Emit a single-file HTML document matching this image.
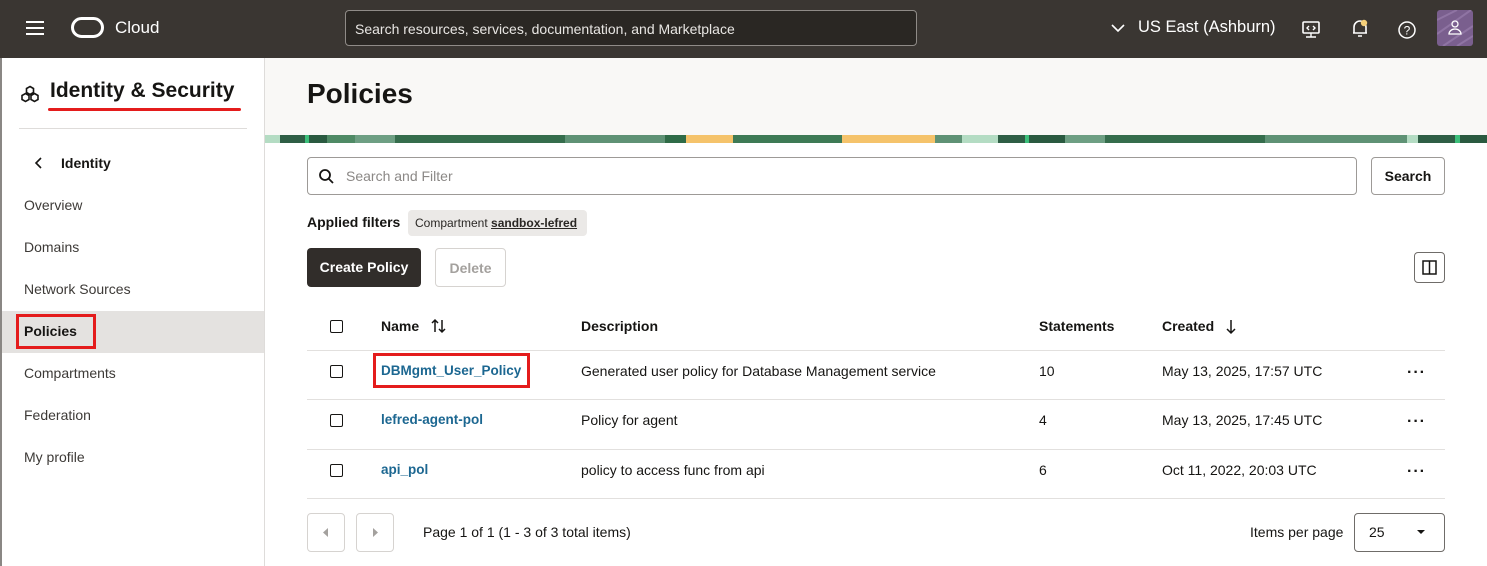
<!DOCTYPE html>
<html><head><meta charset="utf-8"><style>
*{box-sizing:border-box;margin:0;padding:0}
body{width:1487px;height:566px;overflow:hidden;font-family:"Liberation Sans",sans-serif;color:#161513;background:#fff;position:relative;font-size:14px}
.abs{position:absolute}
.top{left:0;top:0;width:1487px;height:58px;background:#3a3632}
.side{left:0;top:58px;width:265px;height:508px;background:#fff;border-right:1px solid #dedcda;border-left:2px solid #8a8784}
.nav{position:absolute;left:24px;font-size:14px;color:#3d3a37}
.hdr{left:265px;top:58px;width:1222px;height:77px;background:#f9f8f6}
.banner{left:265px;top:135px;width:1222px;height:8px;background:linear-gradient(90deg,#b4dcc3 0 15px,#2f5e45 15px 40px,#3cbf7a 40px 44px,#2a5a40 44px 62px,#4f8a65 62px 90px,#6e9f83 90px 130px,#356d4c 130px 300px,#5f9275 300px 400px,#2f6b47 400px 421px,#f5c36b 421px 468px,#3e7a55 468px 577px,#f5c36b 577px 670px,#5f9275 670px 697px,#b4dcc3 697px 733px,#2f5e45 733px 760px,#3cbf7a 760px 764px,#2a5a40 764px 800px,#6e9f83 800px 840px,#356d4c 840px 1000px,#5f9275 1000px 1142px,#b4dcc3 1142px 1153px,#2f5e45 1153px 1190px,#3cbf7a 1190px 1195px,#2a5a40 1195px)}
.cb{position:absolute;left:330px;width:13px;height:13px;border:1.5px solid #161513;border-radius:2px}
.row{position:absolute;left:307px;width:1138px;border-top:1px solid #e2e0de}
.link{color:#1c6791;font-weight:bold;font-size:13.5px}
.dots{position:absolute;left:1407px;font-size:16px;font-weight:bold;letter-spacing:1px}
</style></head><body>
<div class="abs top">
  <svg class="abs" style="left:25px;top:20px" width="20" height="16"><path d="M1 2h18M1 8h18M1 14h18" stroke="#fff" stroke-width="2"/></svg>
  <div class="abs" style="left:71px;top:17px;width:33px;height:21px;border:3.5px solid #fff;border-radius:11px"></div>
  <div class="abs" style="left:115px;top:18px;color:#fff;font-size:17px">Cloud</div>
  <div class="abs" style="left:345px;top:10px;width:572px;height:36px;border:1px solid #8f8b87;border-radius:4px;background:#2a2723;color:#e8e6e3;font-size:14px;padding:10px 0 0 9px">Search resources, services, documentation, and Marketplace</div>
  <svg class="abs" style="left:1110px;top:23px" width="16" height="10"><path d="M2 2l6 6 6-6" stroke="#fff" stroke-width="1.6" fill="none"/></svg>
  <div class="abs" style="left:1138px;top:18px;color:#fff;font-size:16.5px">US East (Ashburn)</div>
  <svg class="abs" style="left:1301px;top:20px" width="20" height="20"><rect x="2" y="2" width="16" height="11" rx="1" stroke="#fff" stroke-width="1.6" fill="none"/><path d="M10 13v4M5 17h10M8 6l-2 2 2 2M12 6l2 2-2 2" stroke="#fff" stroke-width="1.4" fill="none"/></svg>
  <svg class="abs" style="left:1350px;top:18px" width="20" height="22"><path d="M4 15V9a6 6 0 0112 0v6H4zM3 15h14M8 18h4" stroke="#fff" stroke-width="1.6" fill="none"/><circle cx="14" cy="5" r="3.2" fill="#f5d07a"/></svg>
  <svg class="abs" style="left:1397px;top:20px" width="20" height="20"><circle cx="10" cy="10" r="8" stroke="#fff" stroke-width="1.5" fill="none"/><text x="10" y="14.5" fill="#fff" font-size="12" text-anchor="middle" font-family="Liberation Sans">?</text></svg>
  <div class="abs" style="left:1437px;top:10px;width:36px;height:36px;background:#7a5f8e;border-radius:3px"><svg width="36" height="36"><path d="M0 10l20-10M0 24l34-24M6 36l30-20M20 36l16-10" stroke="#8f74a3" stroke-width="2"/><circle cx="18" cy="14" r="3" stroke="#fff" stroke-width="1.3" fill="none"/><path d="M12 24a6 5 0 0112 0z" stroke="#fff" stroke-width="1.3" fill="none"/></svg></div>
</div>
<div class="abs side">
  <svg class="abs" style="left:18px;top:27px" width="20" height="18"><g stroke="#161513" stroke-width="1.6" fill="none"><path d="M10 1.5l3.5 2v4l-3.5 2-3.5-2v-4z"/><path d="M5.5 8.5l3.5 2v4l-3.5 2-3.5-2v-4z"/><path d="M14.5 8.5l3.5 2v4l-3.5 2-3.5-2v-4z"/></g></svg>
  <div class="abs" style="left:48px;top:21px;font-size:21px;font-weight:bold">Identity &amp; Security</div>
  <div class="abs" style="left:46px;top:50px;width:193px;height:3px;background:#e41c1c;border-radius:2px"></div>
  <div class="abs" style="left:17px;top:70px;width:228px;height:1px;background:#dedcda"></div>
  <svg class="abs" style="left:32px;top:98px" width="10" height="14"><path d="M7 2L2 7l5 5" stroke="#161513" stroke-width="1.6" fill="none"/></svg>
  <div class="abs" style="left:59px;top:97px;font-weight:bold;font-size:14px">Identity</div>
  <div class="nav" style="top:139px;left:22px">Overview</div>
  <div class="nav" style="top:181px;left:22px">Domains</div>
  <div class="nav" style="top:223px;left:22px">Network Sources</div>
  <div class="abs" style="left:0;top:253px;width:262px;height:42px;background:#e4e2e0"></div>
  <div class="abs" style="left:14px;top:256px;width:80px;height:35px;border:3px solid #e41c1c"></div>
  <div class="nav" style="top:265px;left:22px;color:#161513;font-weight:bold">Policies</div>
  <div class="nav" style="top:307px;left:22px">Compartments</div>
  <div class="nav" style="top:349px;left:22px">Federation</div>
  <div class="nav" style="top:391px;left:22px">My profile</div>
</div>
<div class="abs hdr"><div class="abs" style="left:42px;top:20px;font-size:28px;font-weight:bold">Policies</div></div>
<div class="abs banner"></div>
<div class="abs" style="left:307px;top:157px;width:1050px;height:38px;border:1px solid #9d9a97;border-radius:4px;color:#8b8886;padding:10px 0 0 38px">Search and Filter</div>
<svg class="abs" style="left:318px;top:168px" width="16" height="16"><circle cx="7" cy="7" r="5" stroke="#161513" stroke-width="1.8" fill="none"/><path d="M11 11l4 4" stroke="#161513" stroke-width="1.8"/></svg>
<div class="abs" style="left:1371px;top:157px;width:74px;height:38px;border:1px solid #9d9a97;border-radius:4px;font-weight:bold;text-align:center;padding-top:10px">Search</div>
<div class="abs" style="left:307px;top:214px;font-weight:bold">Applied filters</div>
<div class="abs" style="left:408px;top:210px;width:179px;height:26px;background:#ebe9e7;border-radius:4px;font-size:12px;padding:6px 0 0 7px;color:#2a2724">Compartment <b style="text-decoration:underline">sandbox-lefred</b></div>
<div class="abs" style="left:307px;top:248px;width:114px;height:39px;background:#312d2a;border-radius:4px;color:#fff;font-weight:bold;text-align:center;padding-top:11px">Create Policy</div>
<div class="abs" style="left:435px;top:248px;width:71px;height:39px;border:1px solid #d6d3d0;border-radius:4px;color:#a4a19e;font-weight:bold;text-align:center;padding-top:11px">Delete</div>
<div class="abs" style="left:1414px;top:252px;width:31px;height:31px;border:1px solid #6f6c69;border-radius:4px"><svg width="29" height="29"><rect x="8" y="8" width="13" height="13" stroke="#161513" stroke-width="1.5" fill="none"/><path d="M14.5 8v13" stroke="#161513" stroke-width="1.5"/></svg></div>
<div class="cb" style="top:320px"></div>
<div class="abs" style="left:381px;top:318px;font-weight:bold">Name</div>
<svg class="abs" style="left:431px;top:318px" width="16" height="16"><path d="M4 14V2M1 5l3-3 3 3M11 2v12M8 11l3 3 3-3" stroke="#161513" stroke-width="1.5" fill="none"/></svg>
<div class="abs" style="left:581px;top:318px;font-weight:bold">Description</div>
<div class="abs" style="left:1039px;top:318px;font-weight:bold">Statements</div>
<div class="abs" style="left:1162px;top:318px;font-weight:bold">Created</div>
<svg class="abs" style="left:1225px;top:319px" width="12" height="16"><path d="M6 1v13M2 10l4 4 4-4" stroke="#161513" stroke-width="1.5" fill="none"/></svg>
<div class="row" style="top:350px"></div>
<div class="cb" style="top:365px"></div>
<div class="abs" style="left:373px;top:353px;width:157px;height:35px;border:3px solid #e41c1c"></div>
<div class="abs link" style="left:381px;top:363px">DBMgmt_User_Policy</div>
<div class="abs" style="left:581px;top:363px">Generated user policy for Database Management service</div>
<div class="abs" style="left:1039px;top:363px">10</div>
<div class="abs" style="left:1162px;top:363px">May 13, 2025, 17:57 UTC</div>
<div class="dots" style="top:364px">···</div>
<div class="row" style="top:399px"></div>
<div class="cb" style="top:414px"></div>
<div class="abs link" style="left:381px;top:412px">lefred-agent-pol</div>
<div class="abs" style="left:581px;top:412px">Policy for agent</div>
<div class="abs" style="left:1039px;top:412px">4</div>
<div class="abs" style="left:1162px;top:412px">May 13, 2025, 17:45 UTC</div>
<div class="dots" style="top:413px">···</div>
<div class="row" style="top:449px"></div>
<div class="cb" style="top:464px"></div>
<div class="abs link" style="left:381px;top:462px">api_pol</div>
<div class="abs" style="left:581px;top:462px">policy to access func from api</div>
<div class="abs" style="left:1039px;top:462px">6</div>
<div class="abs" style="left:1162px;top:462px">Oct 11, 2022, 20:03 UTC</div>
<div class="dots" style="top:463px">···</div>
<div class="row" style="top:498px"></div>
<div class="abs" style="left:307px;top:513px;width:38px;height:39px;border:1px solid #d6d3d0;border-radius:4px"><svg width="36" height="37"><path d="M20 14l-5 4.5 5 4.5z" fill="#a4a19e"/></svg></div>
<div class="abs" style="left:356px;top:513px;width:38px;height:39px;border:1px solid #d6d3d0;border-radius:4px"><svg width="36" height="37"><path d="M16 14l5 4.5-5 4.5z" fill="#a4a19e"/></svg></div>
<div class="abs" style="left:423px;top:524px">Page 1 of 1 (1 - 3 of 3 total items)</div>
<div class="abs" style="left:1250px;top:524px">Items per page</div>
<div class="abs" style="left:1354px;top:513px;width:91px;height:39px;border:1px solid #6f6c69;border-radius:4px;padding:10px 0 0 14px">25</div>
<svg class="abs" style="left:1416px;top:528px" width="10" height="8"><path d="M1 2h8L5 6z" fill="#161513"/></svg>
</body></html>
